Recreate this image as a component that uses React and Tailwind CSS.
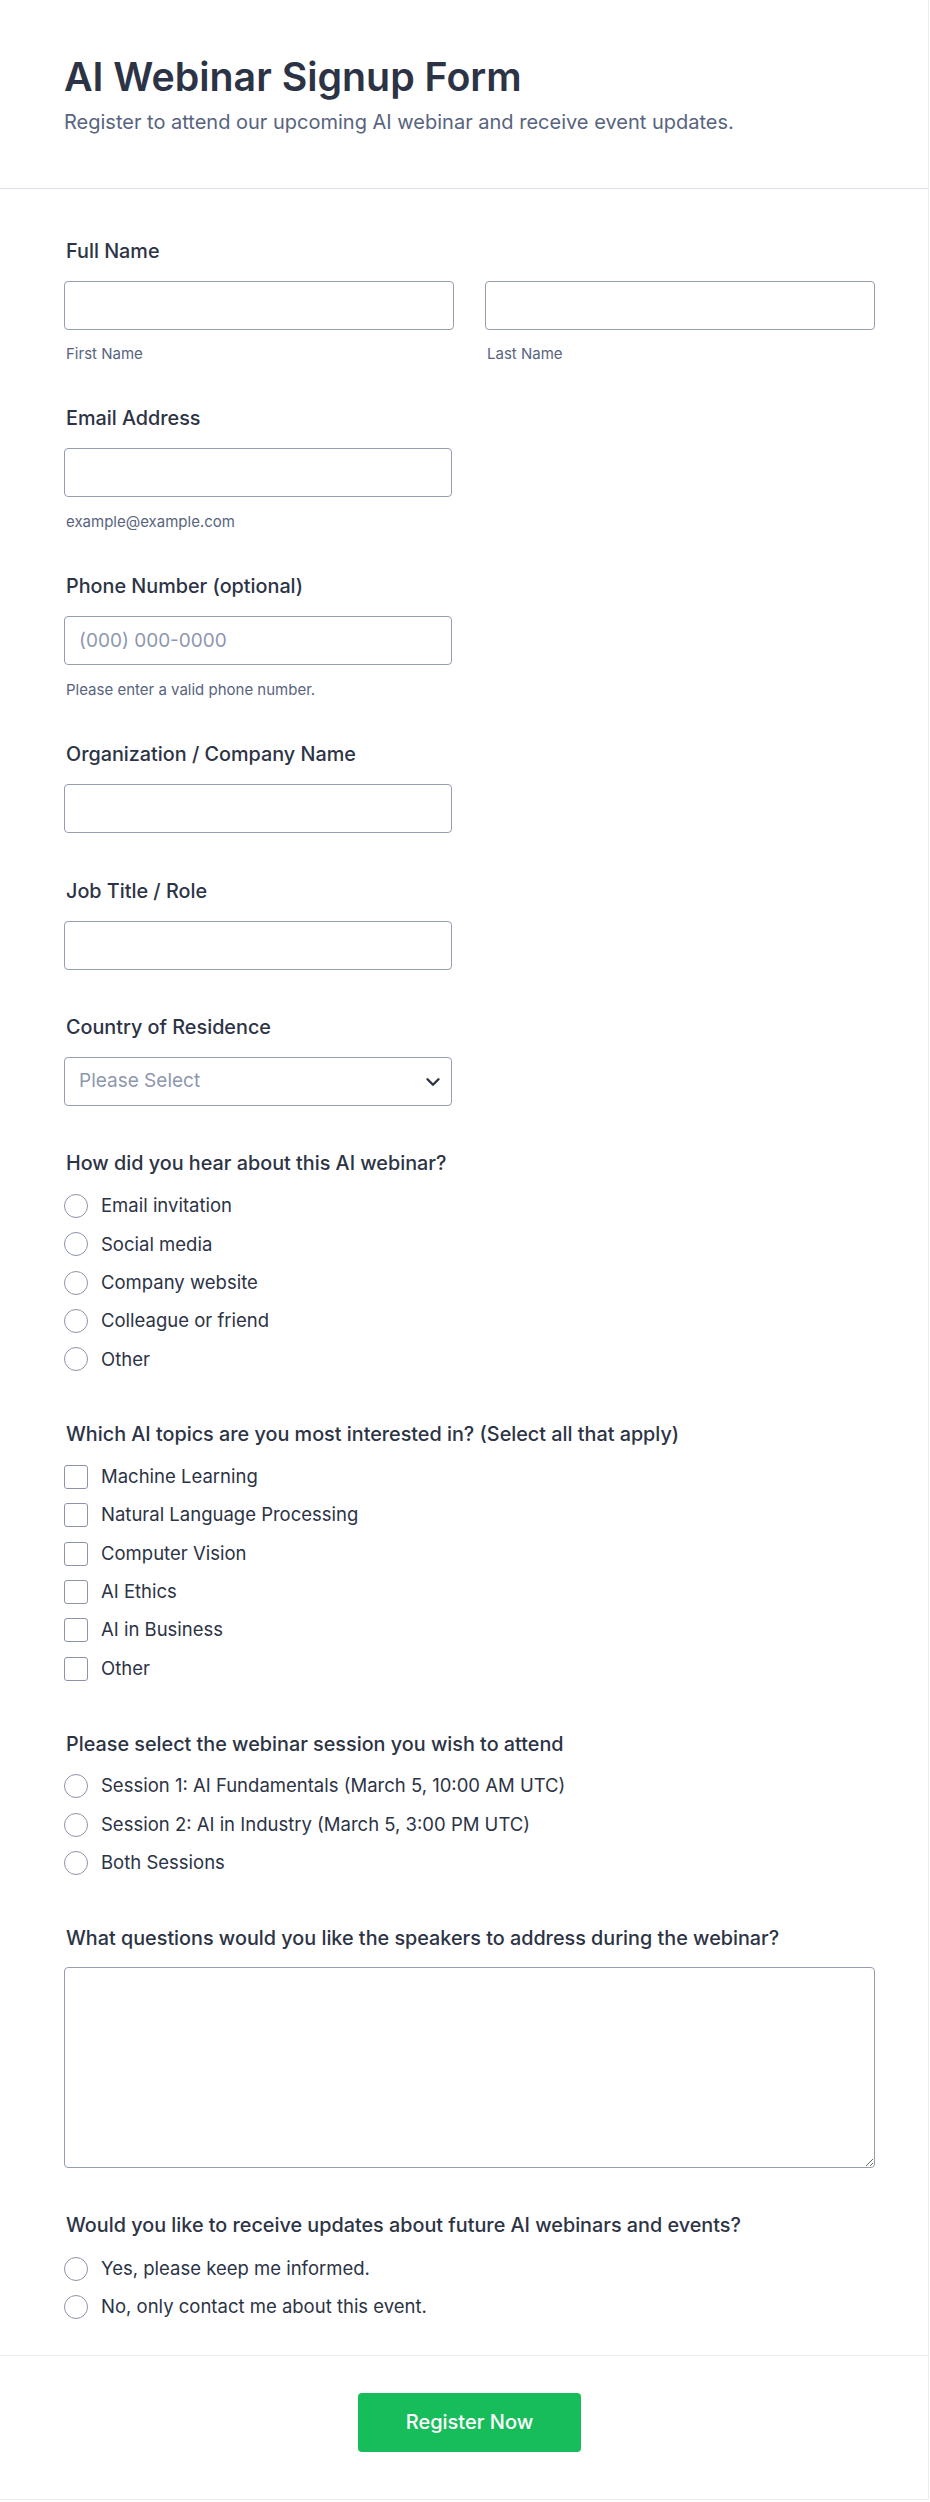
import React from "react";
import { ChevronDown } from "lucide-react";

function Label({ children, className = "" }) {
  return (
    <div className={`pl-[2px] text-[19.8px] leading-[27px] font-medium text-[#2c3345] ${className}`}>
      {children}
    </div>
  );
}

function Sub({ children }) {
  return (
    <div className="mt-[16.7px] pl-[2px] text-[15px] leading-[15px] text-[#57647e]">
      {children}
    </div>
  );
}

function TextInput({ placeholder, className = "" }) {
  return (
    <input
      type="text"
      placeholder={placeholder}
      className={`block h-[49px] rounded-[4px] border border-[#979db1] bg-white px-[14px] text-[19px] text-[#2c3345] placeholder:text-[#8d97ad] outline-none ${className}`}
    />
  );
}

function Option({ type, name, children }) {
  return (
    <label className="flex h-[38.33px] items-center gap-[13px]">
      <input
        type={type}
        name={name}
        className={`h-6 w-6 shrink-0 appearance-none border-[1.5px] border-[#8d93a8] bg-white ${
          type === "radio" ? "rounded-full" : "rounded-[3px]"
        }`}
      />
      <span className="text-[18.5px] text-[#2c3345]">{children}</span>
    </label>
  );
}

function App() {
  const heard = ["Email invitation", "Social media", "Company website", "Colleague or friend", "Other"];
  const topics = [
    "Machine Learning",
    "Natural Language Processing",
    "Computer Vision",
    "AI Ethics",
    "AI in Business",
    "Other",
  ];
  const sessions = [
    "Session 1: AI Fundamentals (March 5, 10:00 AM UTC)",
    "Session 2: AI in Industry (March 5, 3:00 PM UTC)",
    "Both Sessions",
  ];

  return (
    <div className="min-h-screen bg-white font-['Inter',sans-serif] text-[#2c3345]">
      <div className="w-[929px] border-r border-b border-[#ebebf2] bg-white">

        {/* HEADER */}
        <header className="border-b border-[#dfe0ec] px-[64px] pt-[53px] pb-[52px]">
          <h1 className="text-[39.3px] leading-[48px] font-semibold text-[#2c3345]">
            AI Webinar Signup Form
          </h1>
          <p className="mt-[8px] text-[20px] leading-[27px] text-[#57647e]">
            Register to attend our upcoming AI webinar and receive event updates.
          </p>
        </header>

        {/* FIELDS */}
        <form className="pl-[64px] pr-[53px] pt-[48.5px]">

          <div className="pb-[44.3px]">
            <Label>Full Name</Label>
            <div className="mt-[16px] grid grid-cols-2 gap-[31px]">
              <div>
                <TextInput className="w-full" />
                <Sub>First Name</Sub>
              </div>
              <div>
                <TextInput className="w-full" />
                <Sub>Last Name</Sub>
              </div>
            </div>
          </div>

          <div className="pb-[44.3px]">
            <Label>Email Address</Label>
            <TextInput className="mt-[16px] w-[388px]" />
            <Sub>example@example.com</Sub>
          </div>

          <div className="pb-[44.3px]">
            <Label>Phone Number (optional)</Label>
            <TextInput className="mt-[16px] w-[388px]" placeholder="(000) 000-0000" />
            <Sub>Please enter a valid phone number.</Sub>
          </div>

          <div className="pb-[44.3px]">
            <Label>Organization / Company Name</Label>
            <TextInput className="mt-[16px] w-[388px]" />
          </div>

          <div className="pb-[44.3px]">
            <Label>Job Title / Role</Label>
            <TextInput className="mt-[16px] w-[388px]" />
          </div>

          <div className="pb-[44.3px]">
            <Label>Country of Residence</Label>
            <div className="relative mt-[16px] w-[388px]">
              <select className="block h-[49px] w-full appearance-none rounded-[4px] border border-[#979db1] bg-white px-[14px] text-[19px] text-[#8d97ad] outline-none">
                <option>Please Select</option>
              </select>
              <ChevronDown
                size={22}
                strokeWidth={2.6}
                className="pointer-events-none absolute right-[8px] top-[13.5px] text-[#2c3345]"
              />
            </div>
          </div>

          <div className="pb-[42.7px]">
            <Label className="mb-[9.6px]">How did you hear about this AI webinar?</Label>
            {heard.map((h) => (
              <Option key={h} type="radio" name="heard">{h}</Option>
            ))}
          </div>

          <div className="pb-[42.7px]">
            <Label className="mb-[9.6px]">
              Which AI topics are you most interested in? (Select all that apply)
            </Label>
            {topics.map((t) => (
              <Option key={t} type="checkbox" name="topics">{t}</Option>
            ))}
          </div>

          <div className="pb-[42.7px]">
            <Label className="mb-[9.6px]">Please select the webinar session you wish to attend</Label>
            {sessions.map((s) => (
              <Option key={s} type="radio" name="session">{s}</Option>
            ))}
          </div>

          <div className="pb-[44.3px]">
            <Label>What questions would you like the speakers to address during the webinar?</Label>
            <textarea className="mt-[15.5px] block h-[200.5px] w-full rounded-[4px] border border-[#979db1] bg-white px-[14px] py-[10px] text-[19px] outline-none" />
          </div>

          <div className="pb-[28.8px]">
            <Label className="mb-[10.5px]">
              Would you like to receive updates about future AI webinars and events?
            </Label>
            <Option type="radio" name="updates">Yes, please keep me informed.</Option>
            <Option type="radio" name="updates">No, only contact me about this event.</Option>
          </div>
        </form>

        {/* FOOTER */}
        <div className="flex justify-center border-t border-[#ebebf3] pl-[64px] pr-[53px] pt-[36.5px] pb-[47.3px]">
          <button
            type="button"
            className="h-[59px] w-[223px] rounded-[4px] bg-[#18bd5b] text-[20px] font-medium text-white"
          >
            Register Now
          </button>
        </div>

      </div>
    </div>
  );
}

export default App;
